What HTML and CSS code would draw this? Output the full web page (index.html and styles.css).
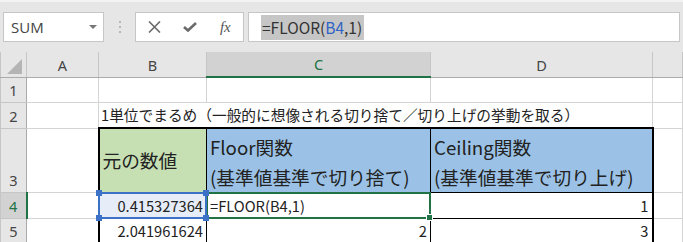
FILE: index.html
```html
<!DOCTYPE html>
<html lang="ja">
<head>
    <meta charset="UTF-8">
    <meta name="viewport" content="width=device-width, initial-scale=1.0">
    <title>FLOOR関数</title>
    <link rel="stylesheet" href="styles.css">
</head>
<body>
    <div class="formula-row">
        <div class="name-box">
            <span>SUM</span>
            <span class="name-arrow"></span>
        </div>
        <div class="grip"><i></i><i></i><i></i></div>
        <div class="fx-buttons">
            <span class="fx-btn">
                <svg width="13" height="12" viewBox="0 0 13 12"><path d="M1 0.5 L12 11.5 M12 0.5 L1 11.5" stroke="#6a6a6a" stroke-width="1.6" fill="none"/></svg>
            </span>
            <span class="fx-btn">
                <svg width="14" height="10" viewBox="0 0 14 10"><path d="M1 5 L5 8.5 L13 1" stroke="#6a6a6a" stroke-width="2.6" fill="none"/></svg>
            </span>
            <span class="fx-btn fx">fx</span>
        </div>
        <div class="formula-bar">
            <span class="formula-sel">=FLOOR(<span class="ref">B4</span>,1)</span>
        </div>
    </div>

    <table class="sheet">
        <colgroup>
            <col class="c-row">
            <col class="c-a">
            <col class="c-b">
            <col class="c-c">
            <col class="c-d">
            <col>
        </colgroup>
        <tr class="heads">
            <th class="corner"><span class="corner-tri"></span></th>
            <th>A</th>
            <th>B</th>
            <th class="sel">C</th>
            <th>D</th>
            <th></th>
        </tr>
        <tr class="r-std">
            <th class="row-head">1</th>
            <td></td><td></td><td></td><td></td><td></td>
        </tr>
        <tr class="r-std">
            <th class="row-head">2</th>
            <td></td>
            <td colspan="3" class="note">1単位でまるめ（一般的に想像される切り捨て／切り上げの挙動を取る）</td>
            <td></td>
        </tr>
        <tr class="r-tall">
            <th class="row-head">3</th>
            <td></td>
            <td class="t-head t-green edge-l">元の数値</td>
            <td class="t-head t-blue">Floor関数<br>(基準値基準で切り捨て)</td>
            <td class="t-head t-blue edge-r">Ceiling関数<br>(基準値基準で切り上げ)</td>
            <td></td>
        </tr>
        <tr class="r-four">
            <th class="row-head sel">4</th>
            <td></td>
            <td class="t-cell num edge-l ref-cell">0.415327364
                <span class="ref-box">
                    <i class="h h-tl"></i><i class="h h-tr"></i><i class="h h-bl"></i><i class="h h-br"></i>
                </span>
            </td>
            <td class="t-cell active">=FLOOR(B4,1)
                <span class="active-box"><i class="fill-handle"></i></span>
            </td>
            <td class="t-cell num edge-r">1</td>
            <td></td>
        </tr>
        <tr class="r-std">
            <th class="row-head">5</th>
            <td></td>
            <td class="t-cell num edge-l">2.041961624</td>
            <td class="t-cell num">2</td>
            <td class="t-cell num edge-r">3</td>
            <td></td>
        </tr>
    </table>
</body>
</html>
```

FILE: styles.css
```css
body {
    margin: 0;
    background: #fff;
    font-family: "Noto Sans CJK JP", "Noto Sans", sans-serif;
    color: #222;
    overflow: hidden;
}

/* formula bar */
.formula-row {
    display: flex;
    align-items: center;
    box-sizing: border-box;
    height: 52px;
    padding: 10px 3px 10px 3px;
    border-top: 2px solid #f2f2f2;
    background: #e6e6e6;
}
.name-box {
    box-sizing: border-box;
    width: 101px;
    height: 30px;
    padding-left: 7px;
    display: flex;
    align-items: center;
    background: #fff;
    border: 1px solid #c6c6c6;
    font-family: "Open Sans", sans-serif;
    font-size: 15px;
    color: #444;
}
.name-arrow {
    margin-left: auto;
    margin-right: 6px;
    border-left: 4px solid transparent;
    border-right: 4px solid transparent;
    border-top: 4px solid #777;
}
.grip {
    width: 31px;
    display: flex;
    flex-direction: column;
    align-items: center;
    gap: 3px;
}
.grip i {
    width: 2px;
    height: 2px;
    background: #b8b8b8;
}
.fx-buttons {
    box-sizing: border-box;
    width: 109px;
    height: 30px;
    padding-left: 1px;
    display: flex;
    align-items: center;
    background: #fff;
    border: 1px solid #c6c6c6;
}
.fx-btn {
    width: 36px;
    display: flex;
    justify-content: center;
    align-items: center;
}
.fx {
    font-family: "Liberation Serif", serif;
    font-style: italic;
    font-size: 15px;
    color: #555;
}
.formula-bar {
    box-sizing: border-box;
    flex: 1;
    height: 30px;
    margin-left: 4px;
    padding-left: 12px;
    display: flex;
    align-items: center;
    background: #fff;
    border: 1px solid #c6c6c6;
}
.formula-sel {
    height: 25px;
    line-height: 25px;
    padding: 0 2px 0 1px;
    background: #c6c6c6;
    font-size: 15.5px;
    color: #333;
}
.ref {
    color: #2f62c4;
}

/* sheet grid */
.sheet {
    width: 100%;
    table-layout: fixed;
    border-collapse: collapse;
    font-size: 14.7px;
}
.c-row { width: 26px; }
.c-a { width: 72px; }
.c-b { width: 108px; }
.c-c { width: 224px; }
.c-d { width: 222px; }

.sheet th,
.sheet td {
    padding: 0 3px 2px 3px;
    border: 1px solid #d4d4d4;
    line-height: 20px;
    vertical-align: bottom;
    white-space: nowrap;
    overflow: visible;
}
.sheet th {
    background: #e6e6e6;
    font-family: "Noto Sans", sans-serif;
    font-weight: normal;
    font-size: 14.5px;
    color: #444;
    text-align: center;
}
.sheet .heads th {
    height: 22px;
    border-top: none;
    border-color: #c6c6c6;
    border-bottom: 1px solid #ababab;
}
.sheet .heads th.sel {
    background: #d2d2d2;
    color: #217346;
    border-bottom: 2px solid #217346;
}
.corner {
    position: relative;
}
.corner-tri {
    position: absolute;
    right: 4px;
    bottom: 3px;
    border-left: 15px solid transparent;
    border-bottom: 15px solid #b4b4b4;
}
.sheet .row-head {
    border-color: #c6c6c6 #ababab #c6c6c6 #c6c6c6;
}
.sheet .row-head.sel {
    background: #d2d2d2;
    color: #217346;
    border-right: 2px solid #217346;
}

.r-std td, .r-std th { height: 22px; }
.r-tall td, .r-tall th { height: 61px; }
.r-four td, .r-four th { height: 23px; }

.sheet .note {
    padding-left: 2px;
}

/* table part */
.sheet .t-head {
    border: 1px solid #000;
    border-top: 2px solid #000;
    font-size: 18.7px;
    line-height: 30px;
    padding: 0 3px 0 3px;
}
.sheet .t-green {
    background: #c6e0b4;
    vertical-align: middle;
}
.sheet .t-blue {
    background: #9bc2e6;
}
.sheet .t-cell {
    border: 1px solid #000;
}
.sheet .edge-l {
    border-left: 2px solid #000;
}
.sheet .edge-r {
    border-right: 2px solid #000;
}
.num {
    text-align: right;
}

/* selection overlays */
.sheet .ref-cell {
    position: relative;
    background: #e6edf8;
}
.ref-box {
    position: absolute;
    z-index: 1;
    top: -1px;
    left: -2px;
    right: -1px;
    bottom: -1px;
    border: 2px solid #3c71c8;
}
.h {
    position: absolute;
    width: 6px;
    height: 6px;
    background: #3c71c8;
}
.h-tl { top: -4px; left: -4px; }
.h-tr { top: -4px; right: -4px; }
.h-bl { bottom: -4px; left: -4px; }
.h-br { bottom: -4px; right: -4px; }

.active {
    position: relative;
}
.active-box {
    position: absolute;
    top: -1px;
    left: -1px;
    right: -1px;
    bottom: -1px;
    border: 2px solid #217346;
}
.fill-handle {
    position: absolute;
    right: -4px;
    bottom: -4px;
    width: 5px;
    height: 5px;
    background: #217346;
    border: 1px solid #fff;
}
```
